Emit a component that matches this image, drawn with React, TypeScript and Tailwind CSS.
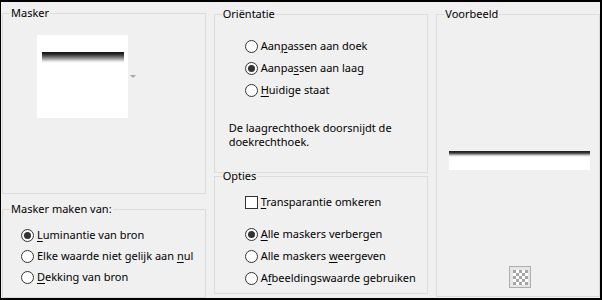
import type { ReactNode } from 'react';

function Radio({ checked = false }: { checked?: boolean }) {
    return (
        <span className="w-[13px] h-[13px] shrink-0 rounded-full border border-[#333333] bg-white flex items-center justify-center">
            {checked && <span className="w-[7px] h-[7px] rounded-full bg-[#333333]" />}
        </span>
    );
}

function Option({ children, checked, box }: { children: ReactNode; checked?: boolean; box?: boolean }) {
    return (
        <div className="h-[22px] flex items-center gap-[3px]">
            {box ? <span className="w-[13px] h-[13px] shrink-0 border border-[#333333] bg-white" /> : <Radio checked={checked} />}
            <span className="whitespace-nowrap">{children}</span>
        </div>
    );
}

function Key({ children }: { children: ReactNode }) {
    return <u className="underline decoration-1 underline-offset-[2px]">{children}</u>;
}

function GroupBox({ title, className, children }: { title: string; className: string; children: ReactNode }) {
    return (
        <fieldset className={`border border-[#dcdcdc] shrink-0 ${className}`}>
            <legend className="ml-[7px] px-[1px] leading-[16px]">{title}</legend>
            {children}
        </fieldset>
    );
}

export default function App() {
    return (
        <div className="w-[602px] h-[300px] bg-[#f0f0f0] border-t-2 border-l border-r-2 border-b-2 border-black font-['Noto_Sans',sans-serif] text-[11px] text-black flex pl-[1px] gap-[8px] overflow-hidden">
            {/* Left column */}
            <div className="w-[204px] flex flex-col pt-[3px] gap-[7px]">
                <GroupBox title="Masker" className="h-[189px]">
                    <div className="flex pl-[34px] pt-[14px]">
                        <div className="w-[91px] h-[83px] bg-white pl-[5px] pt-[17px]">
                            <div className="w-[82px] h-[11px] bg-[linear-gradient(to_bottom,#111111_0%,#2a2a2a_20%,#8a8a8a_55%,#e6e6e6_85%,#ffffff_100%)]" />
                        </div>
                        <div className="ml-[2px] mt-[40px] w-0 h-0 border-l-[3px] border-r-[3px] border-t-[3px] border-l-transparent border-r-transparent border-t-[#a8a8a8]" />
                    </div>
                </GroupBox>
                <GroupBox title="Masker maken van:" className="h-[97px]">
                    <div className="pl-[18px] pt-[8px] flex flex-col [&>div]:h-[21px]">
                        <Option checked><Key>L</Key>uminantie van bron</Option>
                        <Option>Elke waarde niet gelijk aan <Key>n</Key>ul</Option>
                        <Option><Key>D</Key>ekking van bron</Option>
                    </div>
                </GroupBox>
            </div>

            {/* Middle column */}
            <div className="w-[215px] flex flex-col pt-[4px]">
                <GroupBox title="Oriëntatie" className="h-[167px]">
                    <div className="pl-[30px] pt-[13px] flex flex-col">
                        <Option>Aan<Key>p</Key>assen aan doek</Option>
                        <Option checked>Aanpa<Key>s</Key>sen aan laag</Option>
                        <Option><Key>H</Key>uidige staat</Option>
                    </div>
                    <p className="pl-[14px] mt-[20px] leading-[14px]">
                        De laagrechthoek doorsnijdt de
                        <br />
                        doekrechthoek.
                    </p>
                </GroupBox>
                <GroupBox title="Opties" className="h-[126px] -mt-[5px]">
                    <div className="pl-[30px] pt-[7px] flex flex-col">
                        <Option box><Key>T</Key>ransparantie omkeren</Option>
                        <div className="h-[10px]" />
                        <Option checked><Key>A</Key>lle maskers verbergen</Option>
                        <Option>Alle maskers <Key>w</Key>eergeven</Option>
                        <Option>A<Key>f</Key>beeldingswaarde gebruiken</Option>
                    </div>
                </GroupBox>
            </div>

            {/* Right column */}
            <div className="w-[164px] flex flex-col pt-[4px]">
                <GroupBox title="Voorbeeld" className="h-[291px]">
                    <div className="pl-[12px] pt-[129px]">
                        <div className="w-[141px] h-[19px] bg-[linear-gradient(to_bottom,#1a1a1a_0px,#3a3a3a_2px,#7a7a7a_3px,#b8b8b8_4px,#e8e8e8_5px,#ffffff_6px,#ffffff_100%)]" />
                    </div>
                    <div className="pl-[72px] mt-[96px]">
                        <div className="w-[22px] h-[22px] border border-[#adadad] bg-[#e6e6e6] flex items-center justify-center">
                            <svg width="15" height="15" viewBox="0 0 15 15">
                                <rect width="15" height="15" fill="#ffffff" />
                                {[0, 1, 2, 3, 4].map((r) =>
                                    [0, 1, 2, 3, 4].map((c) =>
                                        (r + c) % 2 === 0 ? <rect key={`${r}-${c}`} x={c * 3} y={r * 3} width="3" height="3" fill="#a6a6a6" /> : null
                                    )
                                )}
                            </svg>
                        </div>
                    </div>
                </GroupBox>
            </div>
        </div>
    );
}
